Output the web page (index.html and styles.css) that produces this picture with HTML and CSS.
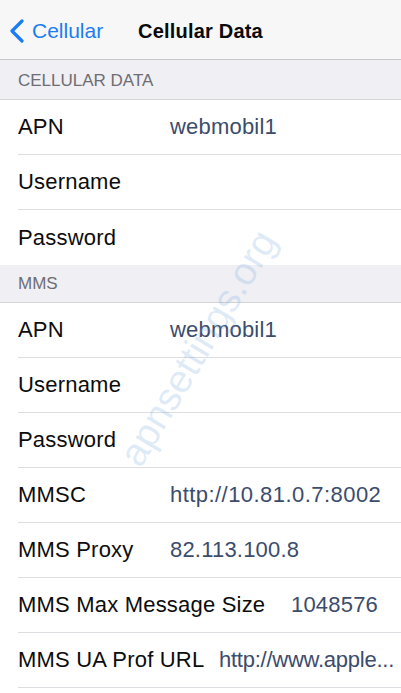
FILE: index.html
```html
<!DOCTYPE html>
<html>
<head>
<meta charset="utf-8">
<link rel="stylesheet" href="styles.css">
</head>
<body>
<div class="screen">
  <header class="nav">
    <div class="nav-left">
      <svg class="chevron" width="16" height="24" viewBox="0 0 16 24"><path d="M13 2 L3 12 L13 22" fill="none" stroke="#1b7cf3" stroke-width="3.2" stroke-linecap="round" stroke-linejoin="round"/></svg>
      <span class="back-text">Cellular</span>
    </div>
    <div class="nav-title">Cellular Data</div>
    <div class="nav-right"></div>
  </header>

  <div class="section-header first">CELLULAR DATA</div>
  <div class="group">
    <div class="row"><span class="label">APN</span><span class="value">webmobil1</span></div>
    <div class="row"><span class="label">Username</span><span class="value"></span></div>
    <div class="row last"><span class="label">Password</span><span class="value"></span></div>
  </div>

  <div class="section-header">MMS</div>
  <div class="group">
    <div class="row"><span class="label">APN</span><span class="value">webmobil1</span></div>
    <div class="row"><span class="label">Username</span><span class="value"></span></div>
    <div class="row"><span class="label">Password</span><span class="value"></span></div>
    <div class="row"><span class="label">MMSC</span><span class="value value-wide">http://10.81.0.7:8002</span></div>
    <div class="row"><span class="label">MMS Proxy</span><span class="value">82.113.100.8</span></div>
    <div class="row"><span class="label label-max">MMS Max Message Size</span><span class="value">1048576</span></div>
    <div class="row"><span class="label label-ua">MMS UA Prof URL</span><span class="value value-tight">http://www.apple...</span></div>
  </div>

  <div class="watermark">apnsettings.org</div>
</div>
</body>
</html>
```

FILE: styles.css
```css
* { box-sizing: border-box; }
html, body {
  margin: 0;
  padding: 0;
  background: #ffffff;
}
body {
  font-family: "Liberation Sans", Arial, Helvetica, sans-serif;
  color: #111;
  overflow: hidden;
}
.screen {
  position: relative;
  width: 401px;
  height: 693px;
  overflow: hidden;
  background: #ffffff;
}
.nav {
  height: 60px;
  background: #f7f7f8;
  border-bottom: 1px solid #c6c6ca;
  display: grid;
  grid-template-columns: 1fr auto 1fr;
  align-items: center;
  padding-top: 3px;
}
.nav-left {
  display: flex;
  align-items: center;
  padding-left: 9px;
  gap: 7px;
}
.chevron { display: block; }
.back-text {
  font-size: 21px;
  color: #1b7cf3;
}
.nav-title {
  font-size: 20px;
  font-weight: bold;
  color: #0a0a0a;
  letter-spacing: 0.2px;
}
.section-header {
  height: 38px;
  background: #efeff4;
  border-bottom: 1px solid #d4d4d8;
  display: flex;
  align-items: center;
  padding-left: 18px;
  padding-top: 1px;
  font-size: 17px;
  color: #6d6d72;
}
.section-header.first { height: 40px; padding-top: 3px; }
.group { background: #fff; }
.row {
  height: 55px;
  margin-left: 18px;
  border-bottom: 1px solid #dedee2;
  display: flex;
  align-items: center;
  font-size: 22px;
  letter-spacing: 0.2px;
  white-space: nowrap;
}
.row.last { border-bottom: none; }
.label {
  width: 152px;
  flex: none;
  color: #0c0c0c;
}
.label-max { width: 273px; }
.label-ua { width: 201px; }
.value {
  color: #3b4c6c;
}
.value-wide { letter-spacing: 0.45px; }
.value-tight { letter-spacing: -0.25px; }
.watermark {
  position: absolute;
  left: 198px;
  top: 348px;
  transform: translate(-50%, -50%) rotate(-59deg);
  font-size: 39px;
  color: rgba(110, 160, 220, 0.22);
  white-space: nowrap;
  pointer-events: none;
}
```
